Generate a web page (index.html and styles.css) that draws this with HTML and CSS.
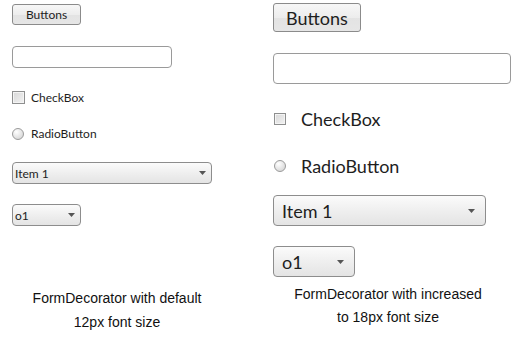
FILE: index.html
```html
<!DOCTYPE html>
<html lang="en">
<head>
  <meta charset="UTF-8" />
  <title>FormDecorator font sizes</title>
  <link rel="stylesheet" href="styles.css">
</head>
<body>

  <main class="demo">
    <section class="fields fields-default">
      <button class="btn">Buttons</button>
      <input class="text-input" type="text" />
      <label class="check"><span class="box"></span>CheckBox</label>
      <label class="radio"><span class="dot"></span>RadioButton</label>
      <div class="select select-wide">
        <span>Item 1</span>
        <svg class="arrow" viewBox="0 0 7 4"><path d="M0 0h7L3.5 4z" /></svg>
      </div>
      <div class="select select-narrow">
        <span>o1</span>
        <svg class="arrow" viewBox="0 0 7 4"><path d="M0 0h7L3.5 4z" /></svg>
      </div>
    </section>

    <section class="fields fields-large">
      <button class="btn">Buttons</button>
      <input class="text-input" type="text" />
      <label class="check"><span class="box"></span>CheckBox</label>
      <label class="radio"><span class="dot"></span>RadioButton</label>
      <div class="select select-wide">
        <span>Item 1</span>
        <svg class="arrow" viewBox="0 0 7 4"><path d="M0 0h7L3.5 4z" /></svg>
      </div>
      <div class="select select-narrow">
        <span>o1</span>
        <svg class="arrow" viewBox="0 0 7 4"><path d="M0 0h7L3.5 4z" /></svg>
      </div>
    </section>

    <p class="caption caption-default">FormDecorator with default<br>12px font size</p>
    <p class="caption caption-large">FormDecorator with increased<br>to 18px font size</p>
  </main>

</body>
</html>
```

FILE: styles.css
```css
body {
  margin: 0;
  background: #fff;
  color: #1e1e1e;
  font-family: Lato, 'Open Sans', sans-serif;
}
.demo {
  display: grid;
  grid-template-columns: 234px 254px;
  column-gap: 27px;
  grid-template-rows: 277px auto;
  row-gap: 6px;
}
.fields {
  display: flex;
  flex-direction: column;
  align-items: flex-start;
  padding-left: 12px;
}
.btn, .text-input, .select {
  box-sizing: border-box;
  font-family: inherit;
  font-size: inherit;
  color: inherit;
  margin: 0;
}
.btn {
  border: 1px solid #8b8b8b;
  border-radius: 3px;
  background: linear-gradient(#f7f7f7, #ededed 50%, #e3e3e3 51%, #e6e6e6);
  padding: 0;
}
.text-input {
  border: 1px solid #9a9a9a;
  border-radius: 4px;
  background: #fff;
  outline: none;
}
.check, .radio {
  display: flex;
  align-items: center;
}
.box {
  box-sizing: border-box;
  border: 1px solid #8e8f8f;
  background: linear-gradient(135deg, #d8d8d8, #f2f2f2);
  box-shadow: inset 0 0 0 1px #f4f4f4;
}
.dot {
  box-sizing: border-box;
  border: 1px solid #9a9a9a;
  border-radius: 50%;
  background: radial-gradient(circle at 35% 30%, #ffffff, #e4e4e4 55%, #cfcfcf);
}
.select {
  display: flex;
  align-items: center;
  justify-content: space-between;
  border: 1px solid #8d8d8d;
  border-radius: 4px;
  background: linear-gradient(#fbfbfb, #efefef 50%, #e4e4e4);
}
.arrow {
  width: 7px;
  height: 4px;
  fill: #555;
}

/* default 12px */
.fields-default {
  font-size: 12px;
  padding-top: 4px;
}
.fields-default .btn { width: 69px; height: 21px; }
.fields-default .text-input { width: 160px; height: 22px; margin-top: 21px; }
.fields-default .check { height: 15px; margin-top: 22px; gap: 6px; }
.fields-default .radio { height: 15px; margin-top: 21px; gap: 7px; }
.fields-default .box { width: 13px; height: 13px; }
.fields-default .dot { width: 12px; height: 12px; }
.fields-default .select { height: 22px; padding: 0 5px 0 2px; }
.fields-default .select-wide { width: 200px; margin-top: 21px; }
.fields-default .select-narrow { width: 69px; margin-top: 20px; }

/* increased 18px */
.fields-large {
  font-size: 18px;
  padding-top: 3px;
}
.fields-large .btn { width: 88px; height: 29px; }
.fields-large .text-input { width: 238px; height: 31px; margin-top: 21px; }
.fields-large .check { height: 25px; margin-top: 22px; gap: 15px; padding-left: 1px; }
.fields-large .radio { height: 25px; margin-top: 22px; gap: 15px; padding-left: 1px; }
.fields-large .box { width: 12px; height: 12px; }
.fields-large .dot { width: 12px; height: 12px; }
.fields-large .select { height: 31px; padding: 0 10px 0 8px; }
.fields-large .select-wide { width: 213px; margin-top: 17px; }
.fields-large .select-narrow { width: 82px; margin-top: 20px; }

.caption {
  margin: 0;
  font-family: 'Liberation Sans', Arial, sans-serif;
  font-size: 14px;
  color: #111;
  text-align: center;
}
.caption-default {
  line-height: 24px;
  padding-top: 3px;
}
.caption-large {
  line-height: 23px;
}
```
